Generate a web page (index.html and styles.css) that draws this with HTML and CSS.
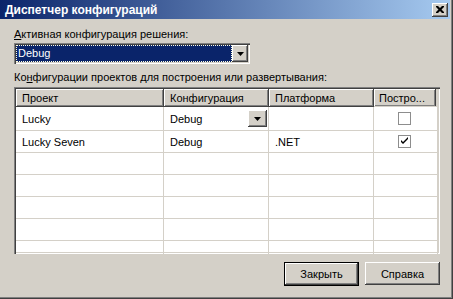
FILE: index.html
```html
<!DOCTYPE html>
<html lang="ru">
<head>
    <meta charset="UTF-8">
    <title>Диспетчер конфигураций</title>
    <link rel="stylesheet" href="styles.css">
</head>
<body>

<div class="window">
    <div class="titlebar">
        <span class="title">Диспетчер конфигураций</span>
        <span class="close-btn">
            <svg width="8" height="7" viewBox="0 0 8 7"><path d="M0 0h2l2 2 2-2h2v1l-2.5 2.5 2.5 2.5v1h-2l-2-2-2 2h-2v-1l2.5-2.5-2.5-2.5z" fill="#000"/></svg>
        </span>
    </div>

    <div class="content">
        <div class="lbl"><u>А</u>ктивная конфигурация решения:</div>
        <div class="combo">
            <span class="combo-value">Debug</span>
            <span class="arrow-btn"><svg width="7" height="4" viewBox="0 0 7 4"><path d="M0 0h7l-3.5 4z" fill="#000"/></svg></span>
        </div>

        <div class="lbl lbl-grid">Ко<u>н</u>фигурации проектов для построения или развертывания:</div>
        <div class="grid">
            <table>
                <thead>
                    <tr>
                        <th class="col1">Проект</th>
                        <th class="col2">Конфигурация</th>
                        <th class="col3">Платформа</th>
                        <th class="col4">Постро...</th>
                    </tr>
                </thead>
                <tbody>
                    <tr class="first-row">
                        <td>Lucky</td>
                        <td>
                            <div class="cell-combo">
                                <span>Debug</span>
                                <span class="arrow-btn cell-arrow"><svg width="7" height="4" viewBox="0 0 7 4"><path d="M0 0h7l-3.5 4z" fill="#000"/></svg></span>
                            </div>
                        </td>
                        <td></td>
                        <td class="chk-cell"><span class="chk"></span></td>
                    </tr>
                    <tr>
                        <td>Lucky Seven</td>
                        <td>Debug</td>
                        <td>.NET</td>
                        <td class="chk-cell"><span class="chk"><svg width="9" height="9" viewBox="0 0 9 9"><path d="M1 3v2l2 2 5-5v-2l-5 5z" fill="#000"/></svg></span></td>
                    </tr>
                    <tr><td></td><td></td><td></td><td></td></tr>
                    <tr><td></td><td></td><td></td><td></td></tr>
                    <tr><td></td><td></td><td></td><td></td></tr>
                    <tr><td></td><td></td><td></td><td></td></tr>
                    <tr><td></td><td></td><td></td><td></td></tr>
                </tbody>
            </table>
        </div>

        <div class="buttons">
            <button class="btn btn-default">Закрыть</button>
            <button class="btn">Справка</button>
        </div>
    </div>
</div>

</body>
</html>
```

FILE: styles.css
```css
body {
    margin: 0;
    font-family: 'Liberation Sans', Arial, sans-serif;
    font-size: 11px;
    color: #000;
}

/* dialog frame, cut off on the left and top */
.window {
    width: 453px;
    height: 299px;
    box-sizing: border-box;
    padding: 0 3px 3px 0;
    background-color: #d4d0c8;
    box-shadow: inset -1px -1px #404040, inset -2px -2px #808080;
}

.titlebar {
    height: 19px;
    display: flex;
    align-items: center;
    justify-content: space-between;
    padding: 0 2px 0 5px;
    background: linear-gradient(to right, #0a246a, #a6caf0);
}

.title {
    color: #fff;
    font-weight: bold;
    font-size: 12px;
}

.close-btn {
    width: 16px;
    height: 14px;
    box-sizing: border-box;
    display: flex;
    align-items: center;
    justify-content: center;
    background-color: #d4d0c8;
    box-shadow: inset -1px -1px #404040, inset 1px 1px #fff, inset -2px -2px #808080;
}

.content {
    padding-left: 14px;
}

.lbl {
    line-height: 13px;
    margin-top: 9px;
}

.lbl-grid {
    margin-top: 7px;
}

/* sunken combobox */
.combo {
    width: 236px;
    height: 21px;
    box-sizing: border-box;
    margin-top: 2px;
    padding: 2px;
    display: flex;
    background-color: #fff;
    box-shadow: inset 1px 1px #808080, inset 2px 2px #404040, inset -1px -1px #fff, inset -2px -2px #d4d0c8;
}

.combo-value {
    flex: 1;
    background-color: #0a246a;
    color: #fff;
    outline: 1px dotted #ffffe0;
    outline-offset: -1px;
    line-height: 17px;
    padding-left: 2px;
}

.arrow-btn {
    width: 16px;
    height: 17px;
    box-sizing: border-box;
    display: flex;
    align-items: center;
    justify-content: center;
    background-color: #d4d0c8;
    box-shadow: inset -1px -1px #404040, inset 1px 1px #fff, inset -2px -2px #808080;
}

/* project grid */
.grid {
    width: 426px;
    height: 167px;
    box-sizing: border-box;
    margin-top: 3px;
    padding: 2px;
    overflow: hidden;
    background-color: #fff;
    box-shadow: inset 1px 1px #808080, inset 2px 2px #404040, inset -1px -1px #fff, inset -2px -2px #d4d0c8;
}

table {
    table-layout: fixed;
    border-collapse: separate;
    border-spacing: 0;
    width: 422px;
}

th, td {
    box-sizing: border-box;
    white-space: nowrap;
    overflow: hidden;
}

.col1 { width: 148px; }
.col2 { width: 105px; }
.col3 { width: 105px; }
.col4 { width: 64px; }

th {
    height: 18px;
    padding: 0 0 0 6px;
    text-align: left;
    font-weight: normal;
    background-color: #d4d0c8;
    box-shadow: inset -1px -1px #404040, inset 1px 1px #fff, inset -2px -2px #808080;
}

th.col4 {
    padding-left: 5px;
    box-shadow: inset -2px -1px #d4d0c8, inset -3px -1px #404040, inset 1px 1px #fff, inset -4px -2px #808080;
}

td {
    height: 22px;
    padding: 0 0 0 6px;
    border-right: 1px solid #d4d0c8;
    border-bottom: 1px solid #d4d0c8;
}

.first-row td {
    height: 24px;
}

.cell-combo {
    display: flex;
    align-items: center;
    justify-content: space-between;
    padding-right: 1px;
}

.cell-arrow {
    width: 19px;
}

.chk-cell {
    padding: 0;
    text-align: center;
}

.chk {
    display: inline-flex;
    align-items: center;
    justify-content: center;
    width: 13px;
    height: 13px;
    box-sizing: border-box;
    border: 1px solid #8d8d8d;
    background-color: #fff;
    vertical-align: middle;
    margin-left: -3px;
}

/* bottom buttons */
.buttons {
    width: 426px;
    margin-top: 8px;
    display: flex;
    justify-content: flex-end;
    gap: 6px;
}

.btn {
    width: 75px;
    height: 23px;
    padding: 0;
    border: none;
    font-family: inherit;
    font-size: 11px;
    color: #000;
    background-color: #d4d0c8;
    box-shadow: inset -1px -1px #404040, inset 1px 1px #fff, inset -2px -2px #808080;
}

.btn-default {
    height: 24px;
    box-shadow: inset 0 0 0 1px #000, inset -2px -2px #404040, inset 2px 2px #fff, inset -3px -3px #808080;
}
```
